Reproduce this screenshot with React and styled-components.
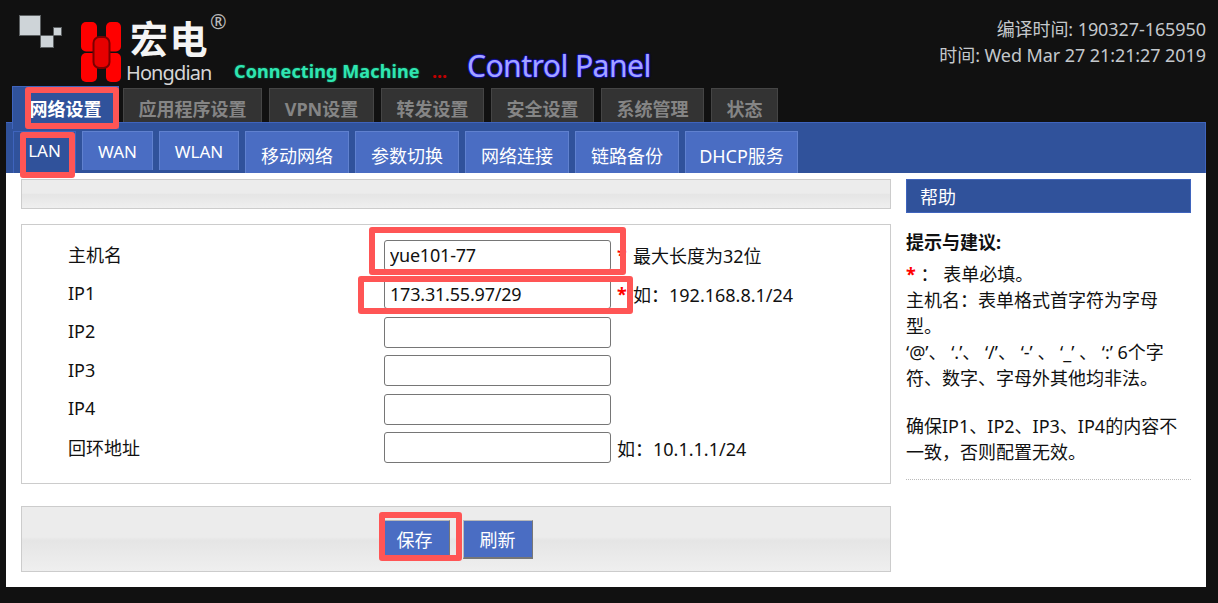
import React from "react";
import styled, { createGlobalStyle } from "styled-components";

const GlobalStyle = createGlobalStyle`
  html, body {
    margin: 0;
    padding: 0;
    background: #111;
    overflow: hidden;
  }
  body {
    font-family: "Noto Sans", "Noto Sans CJK SC", sans-serif;
    font-size: 18px;
    color: #111;
  }
  * {
    box-sizing: border-box;
  }
`;

const topTabs = [
  { label: "应用程序设置", w: 139 },
  { label: "VPN设置", w: 105 },
  { label: "转发设置", w: 103 },
  { label: "安全设置", w: 103 },
  { label: "系统管理", w: 103 },
  { label: "状态", w: 67 },
];

const subTabs = [
  { label: "WAN", w: 71, short: true },
  { label: "WLAN", w: 80, short: true },
  { label: "移动网络", w: 104 },
  { label: "参数切换", w: 104 },
  { label: "网络连接", w: 104 },
  { label: "链路备份", w: 104 },
  { label: "DHCP服务", w: 113 },
];

function SquaresLogo() {
  return (
    <svg width="44" height="34" viewBox="0 0 44 34">
      <g fill="#ced4d8" stroke="#5c6062" strokeWidth="1">
        <rect x="1.5" y="1.5" width="21" height="20" />
        <rect x="22.5" y="21.5" width="13" height="12" />
        <rect x="35.5" y="13.5" width="8" height="8" />
      </g>
    </svg>
  );
}

function HongdianLogo() {
  return (
    <svg width="40" height="60" viewBox="0 0 40 60">
      <g fill="#ff0000">
        <rect x="0" y="0" width="16" height="29.5" rx="5" />
        <rect x="25" y="0" width="15" height="29.5" rx="5" />
        <rect x="0" y="31" width="16" height="29" rx="5" />
        <rect x="25" y="31" width="15" height="29" rx="5" />
      </g>
      <rect x="12.5" y="15" width="16" height="31" rx="6" fill="#e60000" stroke="#7a0000" strokeWidth="2" />
    </svg>
  );
}

export default function App() {
  return (
    <Page>
      <GlobalStyle />
      <Header>
        <SquaresWrap>
          <SquaresLogo />
        </SquaresWrap>
        <RedMarkWrap>
          <HongdianLogo />
        </RedMarkWrap>
        <Brand>
          <BrandCn>
            宏电<Registered>®</Registered>
          </BrandCn>
          <BrandEn>Hongdian</BrandEn>
        </Brand>
        <Tagline>Connecting Machine</Tagline>
        <Dots>...</Dots>
        <PanelTitle>Control Panel</PanelTitle>
        <BuildInfo>
          <div>编译时间: 190327-165950</div>
          <div>时间: Wed Mar 27 21:21:27 2019</div>
        </BuildInfo>
      </Header>

      <TopTabs>
        <ActiveTopTab>
          网络设置
          <Highlight $inset="0 -1px 0 12px" />
        </ActiveTopTab>
        {topTabs.map((t) => (
          <TopTab key={t.label} $w={t.w}>
            {t.label}
          </TopTab>
        ))}
      </TopTabs>

      <SubBar>
        <ActiveSubTab>
          LAN
          <Highlight $inset="0 0 -5px 6px" />
        </ActiveSubTab>
        {subTabs.map((t) => (
          <SubTab key={t.label} $w={t.w} $short={t.short}>
            {t.label}
          </SubTab>
        ))}
      </SubBar>

      <Content>
        <Main>
          <TitleBar />
          <FormBox>
            <Row>
              <Label>主机名</Label>
              <InputWrap>
                <TextInput defaultValue="yue101-77" />
                <Highlight $inset="-13px -15px -4px -15px" />
              </InputWrap>
              <Star>*</Star>
              <Hint>最大长度为32位</Hint>
            </Row>
            <Row>
              <Label>IP1</Label>
              <InputWrap>
                <TextInput defaultValue="173.31.55.97/29" />
                <Highlight $inset="-2px -22px -5px -26px" />
              </InputWrap>
              <Star>*</Star>
              <Hint>如：192.168.8.1/24</Hint>
            </Row>
            <Row>
              <Label>IP2</Label>
              <InputWrap>
                <TextInput />
              </InputWrap>
            </Row>
            <Row>
              <Label>IP3</Label>
              <InputWrap>
                <TextInput />
              </InputWrap>
            </Row>
            <Row>
              <Label>IP4</Label>
              <InputWrap>
                <TextInput />
              </InputWrap>
            </Row>
            <Row>
              <Label>回环地址</Label>
              <InputWrap>
                <TextInput />
              </InputWrap>
              <Hint>如：10.1.1.1/24</Hint>
            </Row>
          </FormBox>
          <ActionBar>
            <ActionButton>
              保存
              <Highlight $inset="-9px -13px -4px -2px" />
            </ActionButton>
            <ActionButton>刷新</ActionButton>
          </ActionBar>
        </Main>

        <Help>
          <HelpHeader>帮助</HelpHeader>
          <HelpTitle>提示与建议:</HelpTitle>
          <HelpBody>
            <HelpLine>
              <HelpStar>*</HelpStar> ： 表单必填。
            </HelpLine>
            <HelpLine>主机名：表单格式首字符为字母</HelpLine>
            <HelpLine>型。</HelpLine>
            <HelpLine>‘@’、 ‘.’、 ‘/’、 ‘-’ 、 ‘_’ 、 ‘:’ 6个字</HelpLine>
            <HelpLine>符、数字、字母外其他均非法。</HelpLine>
            <HelpGap />
            <HelpLine>确保IP1、IP2、IP3、IP4的内容不</HelpLine>
            <HelpLine>一致，否则配置无效。</HelpLine>
          </HelpBody>
        </Help>
      </Content>
    </Page>
  );
}

const Page = styled.div`
  width: 1218px;
  height: 603px;
  background: #111;
  overflow: hidden;
`;

const Header = styled.div`
  display: flex;
  align-items: flex-start;
  height: 86px;
  padding: 0 12px 0 18px;
`;

const SquaresWrap = styled.div`
  margin-top: 14px;
  width: 44px;
  height: 34px;
`;

const RedMarkWrap = styled.div`
  margin: 22px 0 0 19px;
  height: 60px;
`;

const Brand = styled.div`
  margin: 16px 0 0 5px;
  width: 108px;
  display: flex;
  flex-direction: column;
`;

const BrandCn = styled.div`
  position: relative;
  padding-left: 4px;
  font-size: 38px;
  line-height: 44px;
  height: 45px;
  font-weight: 700;
  letter-spacing: 1.5px;
  color: #f4f4f4;
`;

const Registered = styled.span`
  position: absolute;
  left: 84px;
  top: -7px;
  font-size: 20px;
  line-height: 26px;
  font-weight: 400;
  color: #b9b9b9;
`;

const BrandEn = styled.div`
  font-size: 20px;
  line-height: 24px;
  letter-spacing: -0.9px;
  color: #d6d6d6;
`;

const Tagline = styled.div`
  margin-top: 60px;
  width: 198px;
  font-size: 18px;
  line-height: 22px;
  font-weight: 700;
  letter-spacing: 0.1px;
  white-space: nowrap;
  color: #2fe6b0;
  text-shadow: 0 0 2px #118a68;
`;

const Dots = styled.div`
  margin-top: 60px;
  width: 35px;
  font-size: 18px;
  line-height: 22px;
  font-weight: 700;
  color: #c00000;
`;

const PanelTitle = styled.div`
  margin-top: 45px;
  font-size: 30px;
  line-height: 42px;
  letter-spacing: -0.5px;
  white-space: nowrap;
  color: #a4a4ff;
  text-shadow: 0 0 2px #1414ff, 0 0 2px #1414ff, 0 0 1px #1414ff, 0 0 1px #1414ff;
`;

const BuildInfo = styled.div`
  margin: 16px 0 0 auto;
  text-align: right;
  font-size: 18px;
  line-height: 26px;
  letter-spacing: -0.08px;
  white-space: nowrap;
  color: #c4c8cc;
`;

const TopTabs = styled.div`
  display: flex;
  align-items: flex-end;
  height: 36px;
  padding-left: 12px;
  gap: 7px;
`;

const TopTab = styled.div`
  width: ${(p) => p.$w}px;
  height: 34px;
  display: flex;
  align-items: center;
  justify-content: center;
  padding-top: 4px;
  background: #333;
  border: 1px solid #454545;
  border-bottom: 0;
  font-weight: 700;
  white-space: nowrap;
  color: #858585;
`;

const ActiveTopTab = styled.div`
  position: relative;
  z-index: 2;
  width: 107px;
  height: 43px;
  margin: 0 -3px -7px 0;
  display: flex;
  align-items: center;
  justify-content: center;
  background: #30529b;
  border: 1px solid #3f64bd;
  border-bottom: 0;
  font-weight: 700;
  white-space: nowrap;
  color: #fff;
`;

const SubBar = styled.div`
  display: flex;
  align-items: flex-start;
  gap: 6px;
  margin-left: 6px;
  width: 1200px;
  height: 51px;
  padding: 8px 0 0 7px;
  background: #30529b;
  border-top: 1px solid #3f64bd;
  border-right: 1px solid #3f64bd;
`;

const SubTab = styled.div`
  width: ${(p) => p.$w}px;
  height: ${(p) => (p.$short ? 39 : 42)}px;
  display: flex;
  align-items: center;
  justify-content: center;
  padding-top: ${(p) => (p.$short ? 0 : 4)}px;
  background: #4a6dc3;
  border: 1px solid #6081cf;
  border-bottom: 0;
  font-size: ${(p) => (p.$short ? 17 : 18)}px;
  white-space: nowrap;
  color: #fff;
`;

const ActiveSubTab = styled.div`
  position: relative;
  z-index: 2;
  width: 63px;
  height: 42px;
  padding-bottom: 4px;
  display: flex;
  align-items: center;
  justify-content: center;
  border: 1px solid #3f64bd;
  border-bottom: 0;
  font-size: 17px;
  color: #fff;
`;

const Highlight = styled.span`
  position: absolute;
  inset: ${(p) => p.$inset};
  border: 6px solid #ff5555;
  border-radius: 3px;
  pointer-events: none;
  z-index: 3;
`;

const Content = styled.div`
  display: flex;
  gap: 15px;
  margin-left: 6px;
  width: 1200px;
  height: 414px;
  padding: 6px 15px 15px;
  background: #fff;
`;

const Main = styled.div`
  width: 870px;
  display: flex;
  flex-direction: column;
`;

const barBackground = `
  background: linear-gradient(to bottom, #ececec 0%, #ececec 47%, #e5e5e5 52%, #efefef 100%);
  border: 1px solid #cccccc;
`;

const TitleBar = styled.div`
  height: 30px;
  ${barBackground}
`;

const FormBox = styled.div`
  height: 260px;
  margin-top: 15px;
  padding-top: 11px;
  border: 1px solid #cccccc;
`;

const Row = styled.div`
  display: flex;
  align-items: center;
  height: 38.5px;
  padding-left: 46px;
`;

const Label = styled.div`
  width: 316px;
  padding-bottom: 2px;
`;

const InputWrap = styled.div`
  position: relative;
  width: 227px;
  height: 31px;
  margin-right: 6px;
`;

const TextInput = styled.input`
  display: block;
  width: 100%;
  height: 100%;
  padding: 0 5px;
  border: 1px solid #767676;
  border-radius: 3px;
  background: #fff;
  font: inherit;
  letter-spacing: -0.2px;
  color: #111;
  outline: none;
`;

const Star = styled.span`
  width: 16px;
  font-weight: 700;
  color: #ff0000;
`;

const Hint = styled.span`
  white-space: nowrap;
`;

const ActionBar = styled.div`
  display: flex;
  justify-content: center;
  align-items: flex-start;
  gap: 13px;
  height: 66px;
  margin-top: 22px;
  padding-top: 13px;
  ${barBackground}
`;

const ActionButton = styled.button`
  position: relative;
  width: 70px;
  height: 39px;
  padding: 0;
  background: #4a6dc3;
  border: 1px solid #b8b8b8;
  border-right-color: #777;
  border-bottom: 2px solid #777;
  font: inherit;
  color: #fff;
`;

const Help = styled.div`
  width: 285px;
`;

const HelpHeader = styled.div`
  height: 34px;
  padding-left: 13px;
  line-height: 34px;
  background: #30529b;
  border: 1px solid #3f64bd;
  color: #fff;
`;

const HelpTitle = styled.div`
  margin-top: 16px;
  font-weight: 700;
  line-height: 26px;
`;

const HelpBody = styled.div`
  margin-top: 6px;
  padding-bottom: 14px;
  border-bottom: 1px dotted #bbb;
`;

const HelpLine = styled.div`
  line-height: 26px;
  white-space: nowrap;
`;

const HelpStar = styled.span`
  font-weight: 700;
  color: #ff0000;
`;

const HelpGap = styled.div`
  height: 22px;
`;
